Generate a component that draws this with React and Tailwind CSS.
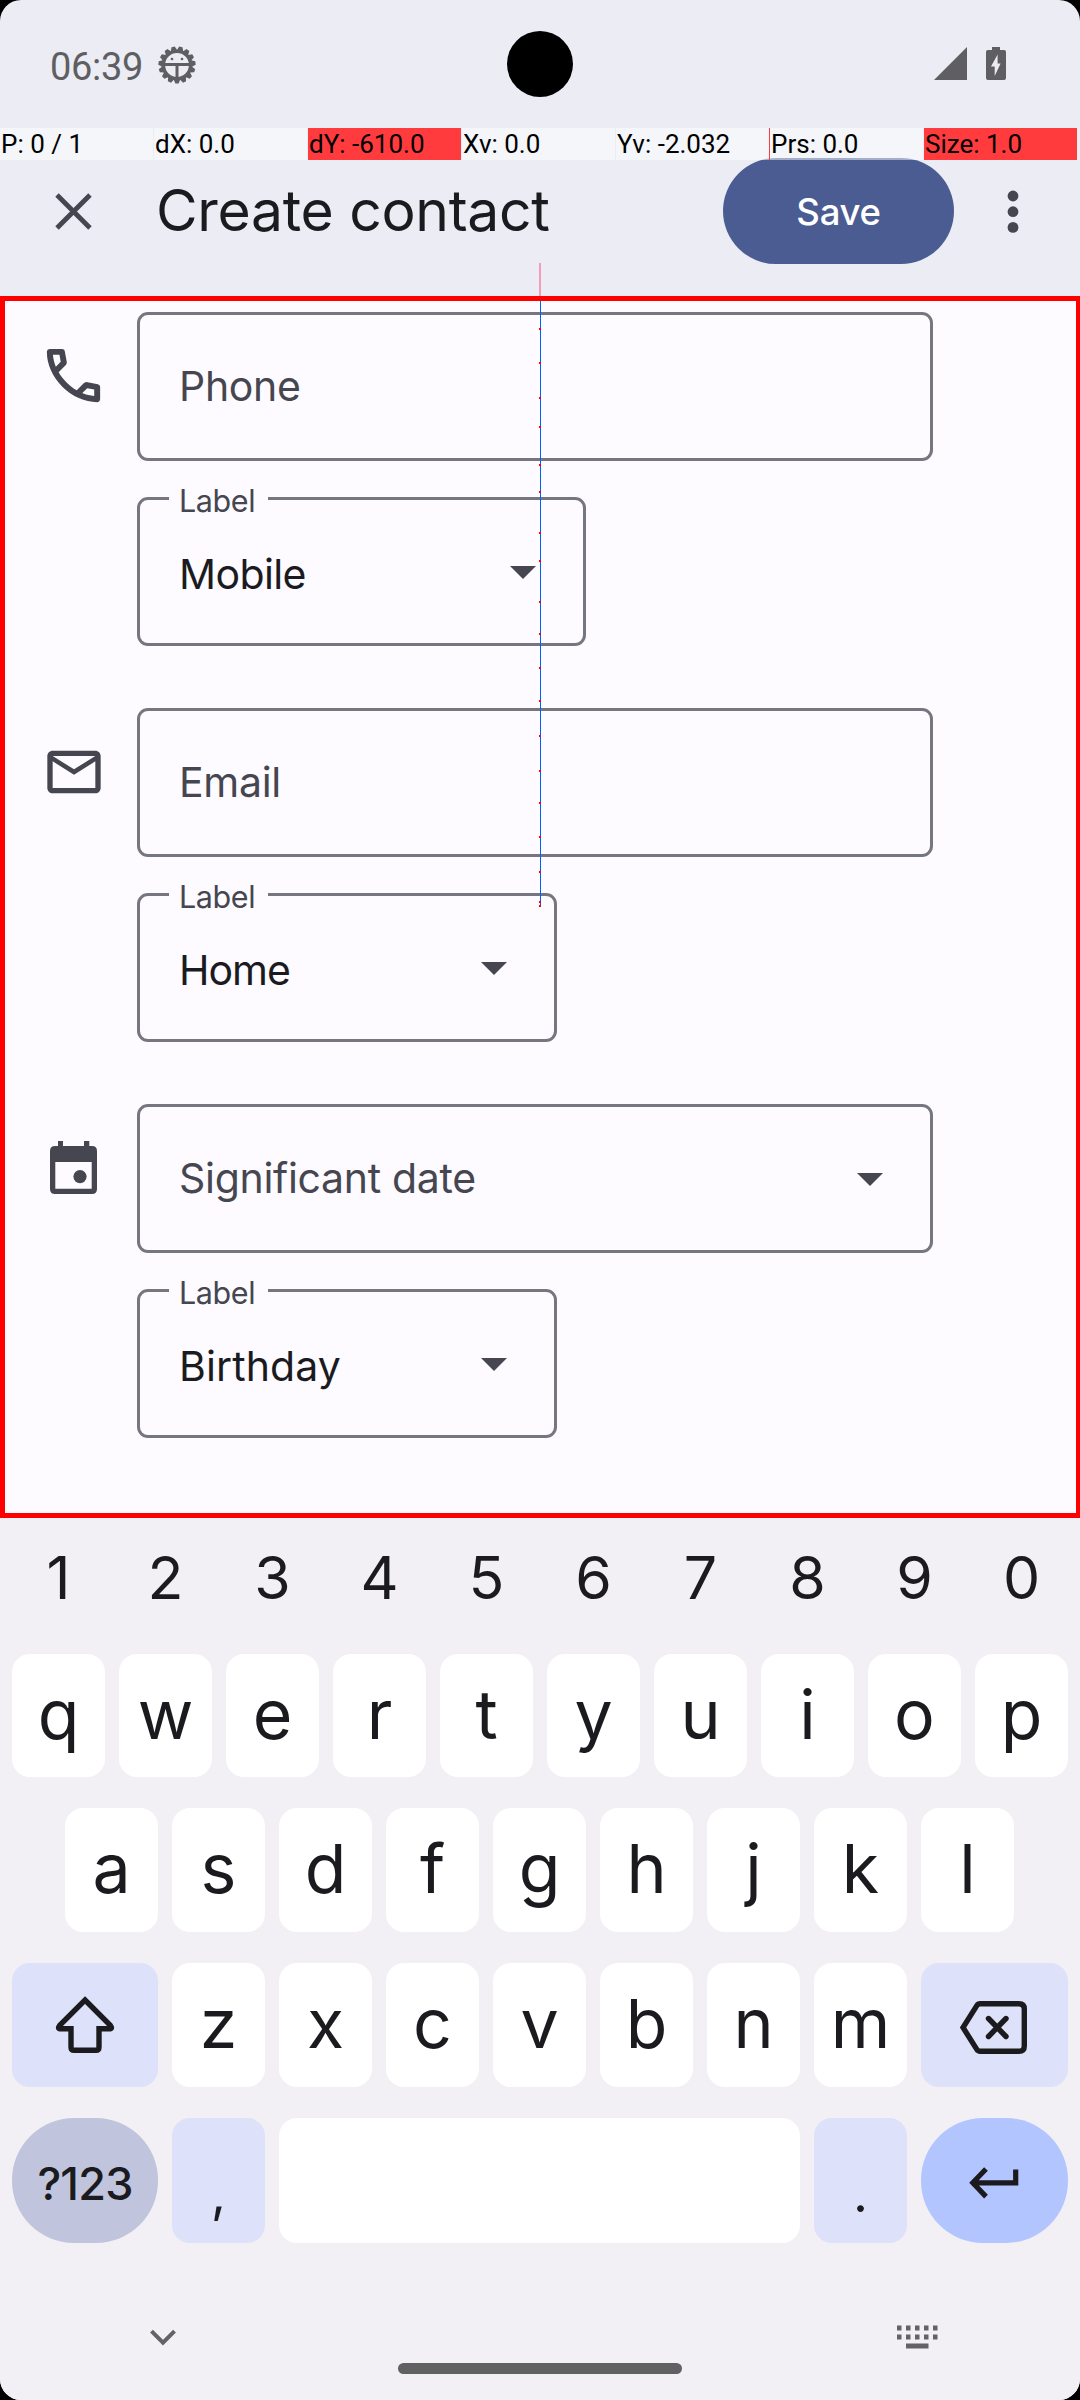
const dots = [328, 362, 397, 426, 464, 491, 532, 560, 601, 633, 667, 700, 735, 770, 802, 836, 871, 901, 905];

const debugCells = [
  { text: "P: 0 / 1" },
  { text: "dX: 0.0" },
  { text: "dY: -610.0", hot: true },
  { text: "Xv: 0.0" },
  { text: "Yv: -2.032" },
  { text: "Prs: 0.0" },
  { text: "Size: 1.0", hot: true },
];

function BugIcon() {
  const teeth = Array.from({ length: 15 }, (_, i) => i * 24 + 12);
  return (
    <svg className="ml-[17px] mt-[46px] h-[38px] w-[38px]" viewBox="-19 -19 38 38">
      {teeth.map((a) => (
        <path key={a} d="M-3.6 -13.5L-1.7 -18.6H1.7L3.6 -13.5Z" transform={`rotate(${a})`} fill="#5f5e62" />
      ))}
      <circle r="13.6" fill="none" stroke="#5f5e62" strokeWidth="3.4" />
      <path d="M-13 -0.4H13M0 -0.4V14" stroke="#5f5e62" strokeWidth="3" />
      <circle cx="-5" cy="-6" r="1.3" fill="#5f5e62" />
      <circle cx="5" cy="-6" r="1.3" fill="#5f5e62" />
    </svg>
  );
}

function StatusBar() {
  return (
    <div className="flex h-[128px] items-start">
      <span className="ml-[50px] mt-[44px] w-[91px] whitespace-nowrap font-['Roboto'] text-[38px] leading-[46px] tracking-[-0.3px] text-[#5f5e62]">
        06:39
      </span>
      <BugIcon />
      <span className="ml-[311px] mt-[31px] h-[66px] w-[66px] rounded-full bg-black" />
      <svg className="ml-[361px] mt-[47px] h-[33px] w-[33px]" viewBox="0 0 33 33">
        <path d="M33 0V33H0Z" fill="#5f5e62" />
      </svg>
      <svg className="ml-[19px] mt-[47px] h-[33px] w-[20px]" viewBox="0 0 20 33">
        <path
          d="M6 0H14V3H18Q20 3 20 5V31Q20 33 18 33H2Q0 33 0 31V5Q0 3 2 3H6ZM11.6 7.5L5 19.5H8.7V29L14.6 16.5H11.6Z"
          fill="#5f5e62"
          fillRule="evenodd"
        />
      </svg>
    </div>
  );
}

function AppBar() {
  return (
    <div className="flex h-[168px] items-start">
      <svg className="ml-[55px] mt-[65px] h-[37px] w-[37px]" viewBox="0 0 37 37">
        <path d="M2 2L35 35M35 2L2 35" stroke="#45464f" strokeWidth="4.8" />
      </svg>
      <h1 className="ml-[64px] mt-[48px] w-[401px] whitespace-nowrap font-['Inter'] text-[57px] leading-[70px] tracking-[-0.3px] text-[#1b1b1f]">
        Create contact
      </h1>
      <button className="ml-[166px] mt-[30px] flex h-[106px] w-[231px] items-center justify-center rounded-[53px] bg-[#4a5c92] pt-[2px] font-['Inter'] text-[36.5px] font-medium tracking-[-0.3px] text-white">
        Save
      </button>
      <svg className="ml-[53px] mt-[62px] h-[44px] w-[12px]" viewBox="0 0 12 44">
        <circle cx="6" cy="6" r="5.4" fill="#45464f" />
        <circle cx="6" cy="21.7" r="5.4" fill="#45464f" />
        <circle cx="6" cy="37.4" r="5.4" fill="#45464f" />
      </svg>
    </div>
  );
}

function PhoneIcon() {
  return (
    <svg className="h-[71px] w-[71px]" viewBox="0 0 24 24" fill="#45464f">
      <path d="M19.95 21q-3.125 0-6.175-1.362t-5.55-3.863t-3.862-5.55T3 4.05q0-.45.3-.75t.75-.3H8.1q.35 0 .625.238t.325.562l.65 3.5q.05.4-.025.675T9.4 8.45L6.975 10.9q.5.925 1.187 1.787t1.513 1.663q.775.775 1.625 1.438T13.1 17l2.35-2.35q.225-.225.588-.337t.712-.063l3.45.7q.35.1.575.363T21 15.9v4.05q0 .45-.3.75t-.75.3M6.025 9l1.65-1.65L7.25 5H5.025q.125 1.025.35 2.025T6.025 9m8.95 8.95q.975.425 1.988.675T19 18.95v-2.2l-2.35-.475z" />
    </svg>
  );
}

function MailIcon() {
  return (
    <svg className="h-[64px] w-[64px]" viewBox="0 0 24 24" fill="#45464f">
      <path d="M22 6c0-1.1-.9-2-2-2H4c-1.1 0-2 .9-2 2v12c0 1.1.9 2 2 2h16c1.1 0 2-.9 2-2V6zm-2 0-8 5-8-5h16zm0 12H4V8l8 5 8-5v10z" />
    </svg>
  );
}

function CalendarIcon() {
  return (
    <svg className="h-[53px] w-[47px]" viewBox="0 0 47 53" fill="#45464f">
      <path
        fillRule="evenodd"
        d="M8 0H13V5H34V0H39.3V5H42Q47 5 47 10V48Q47 53 42 53H5Q0 53 0 48V10Q0 5 5 5H8ZM5.3 21V47.7H41.7V21Z"
      />
      <circle cx="30" cy="35.6" r="6.6" />
    </svg>
  );
}

function Arrow() {
  return (
    <svg className="mt-[2px] h-[13px] w-[26px]" viewBox="0 0 26 13">
      <path d="M0 0H26L13 13Z" fill="#45464f" />
    </svg>
  );
}

function Group({ icon, iconClass, name, arrow, value, valueClass }) {
  return (
    <section className="flex h-[396px] items-start">
      <div className={`flex w-[132px] justify-center ${iconClass}`}>{icon}</div>
      <div className="flex flex-col items-start gap-[36px]">
        <div className="flex h-[149px] w-[796px] items-center justify-between rounded-[11px] border-[3px] border-[#767680] pl-[39px] pr-[47px] font-['Inter'] text-[41px] tracking-[-0.3px] text-[#45464f]">
          <span>{name}</span>
          {arrow && <Arrow />}
        </div>
        <div className={`relative flex h-[149px] items-center justify-between rounded-[11px] border-[3px] border-[#767680] pl-[39px] pr-[47px] font-['Inter'] text-[41px] text-[#1b1b1f] ${valueClass}`}>
          <span className="absolute left-[29px] top-[-18px] w-[99px] bg-[#fdfbff] pl-[10px] text-[30.5px] leading-[38px] tracking-[-0.4px] text-[#45464f]">
            Label
          </span>
          <span className="mt-[6px]">{value}</span>
          <Arrow />
        </div>
      </div>
    </section>
  );
}

function Key({ children, className = "" }) {
  return (
    <div className={`flex w-[93px] justify-center rounded-[18px] bg-white pt-[20px] font-['Inter'] text-[68px] leading-[80px] ${className}`}>
      {children}
    </div>
  );
}

function Keyboard() {
  return (
    <div className="h-[882px] bg-[#f2eff5] text-[#1b1b1f]">
      <div className="flex h-[136px] gap-[14px] pl-[12px] pt-[24px] font-['Inter'] text-[59px] leading-[72px]">
        {[..."1234567890"].map((n) => (
          <span key={n} className="w-[93px] text-center">{n}</span>
        ))}
      </div>
      <div className="flex h-[123px] gap-[14px] pl-[12px]">
        {[..."qwertyuiop"].map((k) => <Key key={k}>{k}</Key>)}
      </div>
      <div className="mt-[31px] flex h-[124px] gap-[14px] pl-[65px]">
        {[..."asdfghjkl"].map((k) => <Key key={k}>{k}</Key>)}
      </div>
      <div className="mt-[31px] flex h-[124px] gap-[14px] pl-[12px]">
        <div className="flex w-[146px] justify-center rounded-[18px] bg-[#dde1f9] pt-[33px]">
          <svg className="h-[58px] w-[60px]" viewBox="0 0 60 58" fill="none" stroke="#1b1b1f" strokeWidth="5.4">
            <path d="M30 4L55.5 29.6Q58 32.8 54 32.8H44V51Q44 54.3 41 54.3H19Q16 54.3 16 51V32.8H6Q2 32.8 4.5 29.6Z" />
          </svg>
        </div>
        {[..."zxcvbnm"].map((k) => <Key key={k}>{k}</Key>)}
        <div className="flex w-[147px] justify-center rounded-[18px] bg-[#dde1f9] pr-[2px] pt-[38px]">
          <svg className="h-[53px] w-[67px]" viewBox="0 0 67 53" fill="none" stroke="#1b1b1f" strokeWidth="5.4">
            <path d="M20 2.7H59Q64.3 2.7 64.3 8V45Q64.3 50.3 59 50.3H20Q18 50.3 16.8 48.4L3 26.5L16.8 4.6Q18 2.7 20 2.7Z" />
            <path d="M28.5 17.5L46 35.5M46 17.5L28.5 35.5" strokeLinecap="round" />
          </svg>
        </div>
      </div>
      <div className="mt-[31px] flex h-[125px] gap-[14px] pl-[12px]">
        <div className="flex w-[146px] justify-center rounded-[62px] bg-[#c0c5dd] pt-[36px] font-['Inter'] text-[45px] font-medium leading-[60px] tracking-[-0.8px]">
          ?123
        </div>
        <div className="flex w-[93px] justify-center rounded-[18px] bg-[#dde1f9] pt-[46px] font-['Inter'] text-[52px] leading-[60px]">,</div>
        <div className="w-[521px] rounded-[18px] bg-white" />
        <div className="flex w-[93px] justify-center rounded-[18px] bg-[#dde1f9] pt-[46px] font-['Inter'] text-[52px] leading-[60px]">.</div>
        <div className="flex w-[147px] justify-center rounded-[62px] bg-[#b2c5ff] pr-[2px] pt-[49px]">
          <svg className="h-[32px] w-[50px]" viewBox="0 0 50 32" fill="none" stroke="#1b1b1f" strokeWidth="5.2">
            <path d="M46.7 2.5V15.8H4M17 2L3.8 15.8L17 29.6" />
          </svg>
        </div>
      </div>
      <div className="flex h-[120px] items-start justify-between pl-[149px] pr-[142px] pt-[82px]">
        <svg className="mt-[4px] h-[17px] w-[28px]" viewBox="0 0 28 17">
          <path d="M2.5 2.2L14 13.7L25.5 2.2" fill="none" stroke="#636364" strokeWidth="4" />
        </svg>
        <svg className="h-[24px] w-[41px]" viewBox="0 0 41 24" fill="#636364">
          {[0, 9, 18, 27, 36].map((x) => (
            <g key={x}>
              <rect x={x} y="0.5" width="4.5" height="5" />
              <rect x={x} y="9.5" width="4.5" height="5" />
            </g>
          ))}
          <rect x="9" y="18.5" width="22.5" height="5" />
        </svg>
      </div>
      <div className="mx-auto h-[11px] w-[284px] rounded-full bg-[#616164]" />
    </div>
  );
}

export default function App() {
  return (
    <div className="h-[2400px] w-[1080px] bg-black">
      <div className="relative h-[2400px] w-[1080px] overflow-hidden rounded-[21px] bg-[#ebecf4]">
        <StatusBar />
        <AppBar />
        <main className="h-[1222px] border-y-[5px] border-l-[5px] border-r-[4px] border-[#ff0000] bg-[#fdfbff] pt-[11px]">
          <Group icon={<PhoneIcon />} iconClass="pt-[28px] pl-[5px]" name="Phone" value="Mobile" valueClass="w-[449px] tracking-[-0.6px]" />
          <Group icon={<MailIcon />} iconClass="pt-[32px] pl-[5px]" name="Email" value="Home" valueClass="w-[420px] tracking-[-1px]" />
          <Group icon={<CalendarIcon />} iconClass="pt-[37px] pl-[5px]" name="Significant date" arrow value="Birthday" valueClass="w-[420px] tracking-[0.1px]" />
        </main>
        <Keyboard />

        {/* pointer diagnostics strip */}
        <div className="absolute left-0 top-[128px] flex h-[32px] gap-px">
          {debugCells.map((c) => (
            <span
              key={c.text}
              className={`w-[153px] whitespace-nowrap pl-[1px] font-['Roboto'] text-[26px] leading-[32px] text-black ${c.hot ? "bg-[#ff3b3e]" : "bg-white/50"}`}
            >
              {c.text}
            </span>
          ))}
        </div>
        <div className="absolute left-[769px] top-[128px] h-[32px] w-px bg-[#ff3b3e]" />

        {/* pointer trail */}
        <div className="absolute left-[539px] top-[263px] h-[33px] w-[2px] bg-[#f69abb]" />
        <div className="absolute left-[540px] top-[301px] h-[604px] w-px bg-[#0060ff]" />
        {dots.map((y) => (
          <span key={y} className="absolute left-[539px] h-[2px] w-[2px] bg-[#ff0000]" style={{ top: y }} />
        ))}
      </div>
    </div>
  );
}
